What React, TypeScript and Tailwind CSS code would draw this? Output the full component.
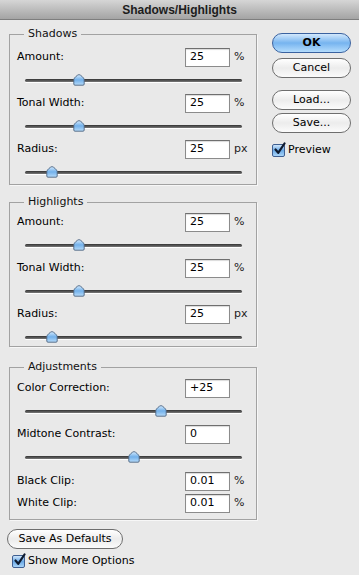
import React from 'react';

interface RowProps {
    label: string;
    value: string;
    unit?: string;
    pos?: number;
    height?: string;
}

const Thumb: React.FC = () => (
    <svg width="12" height="12" viewBox="0 0 12 12">
        <defs>
            <linearGradient id="thumbFill" x1="0" y1="0" x2="0" y2="1">
                <stop offset="0" stopColor="#d6ecff" />
                <stop offset="0.5" stopColor="#72b0ea" />
                <stop offset="1" stopColor="#b7dcfb" />
            </linearGradient>
        </defs>
        <path
            d="M6 0.6 C7.4 0.6 11.2 4 11.2 5.6 V10 Q11.2 11.2 10 11.2 H2 Q0.8 11.2 0.8 10 V5.6 C0.8 4 4.6 0.6 6 0.6 Z"
            fill="url(#thumbFill)"
            stroke="#4f6580"
            strokeWidth="0.9"
        />
    </svg>
);

const Slider: React.FC<{ pos: number }> = ({ pos }) => (
    <div className="relative ml-[15px] w-[217px] h-[14px] mt-[6px] flex items-center">
        <div className="w-full h-[3px] rounded-full bg-gradient-to-b from-[#333333] to-[#7a7a7a] shadow-[0_1px_0_#ffffff]" />
        <div className="absolute top-[1px]" style={{ left: `${pos * 217 - 6}px` }}>
            <Thumb />
        </div>
    </div>
);

const Field: React.FC<{ value: string }> = ({ value }) => (
    <div className="w-[45px] h-[19px] bg-white border border-[#8b8b8b] border-t-[#6f6f6f] shadow-[inset_0_1px_1px_rgba(0,0,0,0.15)] flex items-center pl-[4px] text-[11px] text-black">
        {value}
    </div>
);

const Row: React.FC<RowProps> = ({ label, value, unit, pos, height = 'h-[46px]' }) => (
    <div className={height}>
        <div className="flex items-center h-[19px] pl-[7px]">
            <span className="flex-1">{label}</span>
            <Field value={value} />
            <span className="w-[26px] pl-[4px] text-[#222]">{unit}</span>
        </div>
        {pos !== undefined && <Slider pos={pos} />}
    </div>
);

const Group: React.FC<{ title: string; className: string; children: React.ReactNode }> = ({ title, className, children }) => (
    <div className={`relative border border-[#a2a2a2] shadow-[1px_1px_0_#f7f7f7] ${className}`}>
        <span className="absolute -top-[9px] left-[14px] px-[4px] bg-[#e9e9e9] text-[11px] text-[#111] leading-[16px]">
            {title}
        </span>
        {children}
    </div>
);

const AquaButton: React.FC<{ label: string; primary?: boolean; className?: string }> = ({ label, primary, className = '' }) => (
    <div
        className={`h-[20px] rounded-full border flex items-center justify-center text-[11px] ${
            primary
                ? 'border-[#3a62a0] bg-gradient-to-b from-[#d2e8fc] via-[#76b4ef] to-[#b4dcfc] text-black'
                : 'border-[#6e6e6e] bg-gradient-to-b from-[#ffffff] via-[#ececec] to-[#fbfbfb] text-black'
        } ${className}`}
    >
        {label}
    </div>
);

const CheckBox: React.FC = () => (
    <div className="w-[13px] h-[13px] rounded-[2px] border border-[#3f5f91] bg-gradient-to-b from-[#cfe6fb] via-[#6aa9e6] to-[#a9d4f8] relative">
        <svg className="absolute -top-[3px] left-[0px]" width="14" height="14" viewBox="0 0 14 14">
            <path d="M2.5 7.5 L5.2 10.8 L11.5 1.5" fill="none" stroke="#0e1a2e" strokeWidth="2.2" strokeLinecap="round" strokeLinejoin="round" />
        </svg>
    </div>
);

const App: React.FC = () => {
    return (
        <div className="w-[359px] h-[575px] bg-[#e9e9e9] overflow-hidden font-['DejaVu_Sans',sans-serif] text-[11px] text-black">
            <div className="h-[20px] bg-gradient-to-b from-[#d6d6d6] to-[#a4a4a4] border-b border-[#7e7e7e] flex items-center justify-center font-['Liberation_Sans',sans-serif] font-bold text-[12px] text-[#1c1c1c]">
                Shadows/Highlights
            </div>

            <div className="flex">
                <div className="ml-[9px] w-[248px]">
                    <Group title="Shadows" className="mt-[14px] h-[151px] pt-[13px]">
                        <Row label="Amount:" value="25" unit="%" pos={0.25} />
                        <Row label="Tonal Width:" value="25" unit="%" pos={0.25} />
                        <Row label="Radius:" value="25" unit="px" pos={0.125} />
                    </Group>

                    <Group title="Highlights" className="mt-[17px] h-[145px] pt-[10px]">
                        <Row label="Amount:" value="25" unit="%" pos={0.25} />
                        <Row label="Tonal Width:" value="25" unit="%" pos={0.25} />
                        <Row label="Radius:" value="25" unit="px" pos={0.125} />
                    </Group>

                    <Group title="Adjustments" className="mt-[20px] h-[153px] pt-[11px]">
                        <Row label="Color Correction:" value="+25" pos={0.625} />
                        <Row label="Midtone Contrast:" value="0" pos={0.5} height="h-[47px]" />
                        <Row label="Black Clip:" value="0.01" unit="%" height="h-[22px]" />
                        <Row label="White Clip:" value="0.01" unit="%" height="h-[22px]" />
                    </Group>

                    <AquaButton label="Save As Defaults" className="mt-[9px] -ml-[2px] w-[116px] h-[19px]" />

                    <div className="flex items-center mt-[5px] ml-[3px] h-[14px] gap-[3px]">
                        <CheckBox />
                        <span>Show More Options</span>
                    </div>
                </div>

                <div className="ml-[15px] w-[79px] pt-[13px] flex flex-col">
                    <AquaButton label="OK" primary className="font-bold" />
                    <AquaButton label="Cancel" className="mt-[5px]" />
                    <AquaButton label="Load..." className="mt-[12px]" />
                    <AquaButton label="Save..." className="mt-[3px]" />
                    <div className="flex items-center mt-[10px] h-[14px] gap-[3px]">
                        <CheckBox />
                        <span>Preview</span>
                    </div>
                </div>
            </div>
        </div>
    );
};

export default App;
